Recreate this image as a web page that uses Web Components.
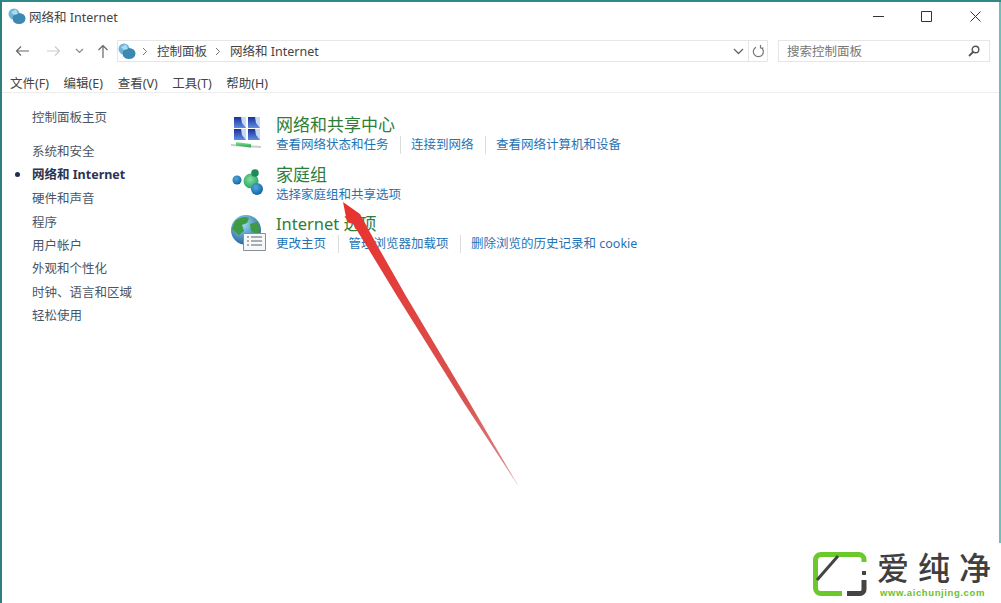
<!DOCTYPE html>
<html>
<head>
<meta charset="utf-8">
<style>
  html, body { margin: 0; padding: 0; background: #fff; }
  body { width: 1001px; height: 603px; overflow: hidden; font-family: "Noto Sans", "Noto Sans CJK SC", sans-serif; color: #444; }
</style>
</head>
<body>
<cp-window>
  <cp-sidebar slot="side"></cp-sidebar>
  <cp-section slot="main" heading="网络和共享中心" links="查看网络状态和任务|连接到网络|查看网络计算机和设备" icon="net"></cp-section>
  <cp-section slot="main" heading="家庭组" links="选择家庭组和共享选项" icon="home"></cp-section>
  <cp-section slot="main" tight heading="Internet 选项" links="更改主页|管理浏览器加载项|删除浏览的历史记录和 cookie" icon="globe"></cp-section>
  <site-logo slot="foot"></site-logo>
</cp-window>
<red-arrow></red-arrow>

<script>
const NET_ICON = `<svg width="18" height="17" viewBox="0 0 18 17"><circle cx="6" cy="6" r="5.500" fill="#6fb4d8"/><ellipse cx="11" cy="10.500" rx="6.500" ry="5.500" fill="#3d88b0"/><path d="M3 4l5-2.500 2 4.500-4 1z" fill="#a8dcef"/></svg>`;

class CpWindow extends HTMLElement {
  constructor() {
    super();
    const root = this.attachShadow({ mode: 'open' });
    root.innerHTML = `
    <style>
      :host { display: flex; flex-direction: column; width: 1001px; height: 603px; box-sizing: border-box; border-top: 2px solid #2f8a86; border-left: 2px solid #2f7f7c; background: #fff; font-size: 12.500px; }
      .frame { display: flex; flex-direction: column; height: 541px; flex: none; border-right: 2px solid #6cc0bb; }
      .title { display: flex; align-items: center; height: 28px; margin-bottom: 2px; padding-left: 6px; }
      .title span { flex: 1; margin-left: 3px; font-size: 12.500px; }
      .ctl { width: 48px; height: 28px; display: flex; align-items: center; justify-content: center; }
      .ctl.x { width: 49px; box-sizing: border-box; justify-content: flex-start; padding-left: 20px; }
      .nav { display: flex; align-items: center; height: 22px; margin-top: 8px; padding-left: 8px; }
      .nav svg { display: block; }
      .btn { display: flex; justify-content: center; flex: none; }
      .addr { display: flex; align-items: center; box-sizing: border-box; width: 631px; height: 22px; margin-left: 6px; border: 1px solid #e6e6e6; border-right: 0; }
      .addr span, .search span { padding-bottom: 2px; }
      .addr .grow { flex: 1; }
      .addr .ch { margin: 0 9px 0 8px; }
      .addr .ch.first { margin-left: 6px; }
      .ref { box-sizing: border-box; width: 20px; height: 22px; border: 1px solid #e6e6e6; display: flex; align-items: center; justify-content: center; }
      .search { display: flex; align-items: center; box-sizing: border-box; width: 212px; height: 22px; margin-left: 10px; border: 1px solid #e6e6e6; padding: 0 9px 0 8px; color: #777; }
      .search span { flex: 1; }
      .menu { display: flex; height: 19px; align-items: center; padding-left: 8px; gap: 14.600px; border-bottom: 1px solid #ededed; margin-top: 11px; }
      .body { display: flex; flex: 1; }
      .side { width: 228px; flex: none; }
      .main { display: flex; flex-direction: column; padding-top: 20px; }
      .foot { flex: 1; }
    </style>
    <div class="frame">
      <div class="title">
        ${NET_ICON}
        <span>网络和 Internet</span>
        <div class="ctl"><svg width="11" height="11"><path d="M0 5.500h11" stroke="#333"/></svg></div>
        <div class="ctl"><svg width="11" height="11"><path d="M.5.500h10v10H.5z" fill="none" stroke="#333"/></svg></div>
        <div class="ctl x"><svg width="11" height="11"><path d="M.5.500l10 10M10.500.500l-10 10" stroke="#333"/></svg></div>
      </div>
      <div class="nav">
        <div class="btn" style="width:24px"><svg width="14" height="12"><path d="M14 6H1.500M6 1.500L1.500 6 6 10.500" fill="none" stroke="#666" stroke-width="1.200"/></svg></div>
        <div class="btn" style="width:24px;margin-left:8px"><svg width="14" height="12"><path d="M0 6h12.500M8 1.500L12.500 6 8 10.500" fill="none" stroke="#ccc" stroke-width="1.200"/></svg></div>
        <div class="btn" style="width:16px;margin-left:5px"><svg width="9" height="6"><path d="M1 1l3.500 3.500L8 1" fill="none" stroke="#888" stroke-width="1.200"/></svg></div>
        <div class="btn" style="width:16px;margin-left:8px"><svg width="12" height="14"><path d="M6 14V1.500M1.500 6L6 1.500 10.500 6" fill="none" stroke="#666" stroke-width="1.200"/></svg></div>
        <div class="addr">
          ${NET_ICON}
          <svg class="ch first" width="6" height="9"><path d="M1 1l3.500 3.500L1 8" fill="none" stroke="#777"/></svg>
          <span>控制面板</span>
          <svg class="ch" width="6" height="9"><path d="M1 1l3.500 3.500L1 8" fill="none" stroke="#777"/></svg>
          <span>网络和 Internet</span>
          <span class="grow"></span>
          <svg width="11" height="7" style="margin-right:4px"><path d="M1 1l4.500 4.500L10 1" fill="none" stroke="#666" stroke-width="1.300"/></svg>
        </div>
        <div class="ref"><svg width="13" height="13"><path d="M8.500 2.200A5 5 0 1 1 4 2.300M8.500 0v3h3" fill="none" stroke="#777" stroke-width="1.200"/></svg></div>
        <div class="search"><span>搜索控制面板</span><svg width="12" height="12"><circle cx="7.500" cy="4.500" r="3.300" fill="none" stroke="#555" stroke-width="1.400"/><path d="M5 7L1 11" stroke="#555" stroke-width="1.800"/></svg></div>
      </div>
      <div class="menu"><span>文件(F)</span><span>编辑(E)</span><span>查看(V)</span><span>工具(T)</span><span>帮助(H)</span></div>
      <div class="body">
        <div class="side"><slot name="side"></slot></div>
        <div class="main"><slot name="main"></slot></div>
      </div>
    </div>
    <div class="foot"><slot name="foot"></slot></div>`;
  }
}

class CpSidebar extends HTMLElement {
  constructor() {
    super();
    const root = this.attachShadow({ mode: 'open' });
    const items = ['硬件和声音','程序','用户帐户','外观和个性化','时钟、语言和区域','轻松使用'];
    root.innerHTML = `
    <style>
      :host { display: block; padding: 13px 0 0 30px; font-size: 12.500px; color: #4a5566; }
      div { height: 23.400px; line-height: 23.400px; white-space: nowrap; }
      .home { margin-bottom: 11px; }
      .cur { font-weight: bold; color: #2b3350; position: relative; top: -1px; }
      .cur::before { content: ""; position: absolute; left: -17px; top: 9px; width: 5px; height: 5px; border-radius: 50%; background: #1f2d50; }
    </style>
    <div class="home">控制面板主页</div>
    <div>系统和安全</div>
    <div class="cur">网络和 Internet</div>
    ${items.map(i => `<div>${i}</div>`).join('')}`;
  }
}

const MON = (x, y) => `<rect x="${x}" y="${y}" width="12" height="11" fill="#c9d9f4"/><path d="M${x} ${y}h7l1 6 4 5H${x}z" fill="url(#m)"/>`;

const ICONS = {
  net: `<svg width="32" height="34" viewBox="0 0 32 34"><defs><linearGradient id="m" x1="0" y1="0" x2="0" y2="1"><stop offset="0" stop-color="#1b2f9a"/><stop offset="1" stop-color="#5f8fe0"/></linearGradient><linearGradient id="t" x1="0" y1="0" x2="0" y2="1"><stop offset="0" stop-color="#8be79a"/><stop offset="1" stop-color="#1f9f4a"/></linearGradient></defs>${MON(4, 1)}${MON(18, 1)}${MON(4, 13)}${MON(18, 13)}<path d="M1 28l30 2v2L1 30z" fill="#c5ced4"/><path d="M6 26l15 2v3.500L6 29.500z" fill="url(#t)"/></svg>`,
  home: `<svg width="34" height="32" viewBox="0 0 34 32"><defs><radialGradient id="b" cx="40%" cy="35%" r="70%"><stop offset="0" stop-color="#4fa8e0"/><stop offset="1" stop-color="#12609c"/></radialGradient><radialGradient id="h" cx="45%" cy="40%" r="70%"><stop offset="0" stop-color="#7fe0a0"/><stop offset="1" stop-color="#1f9a58"/></radialGradient></defs><circle cx="7" cy="14" r="4.500" fill="url(#b)"/><circle cx="21" cy="15" r="7.500" fill="url(#h)"/><circle cx="25" cy="7" r="3.800" fill="#1e8a5a"/><circle cx="27" cy="23" r="6" fill="url(#b)"/></svg>`,
  globe: `<svg width="38" height="36" viewBox="0 0 38 36"><defs><radialGradient id="g" cx="40%" cy="30%" r="75%"><stop offset="0" stop-color="#9fdcf4"/><stop offset="1" stop-color="#1a5f98"/></radialGradient></defs><circle cx="16" cy="15" r="15" fill="url(#g)"/><path d="M5 6c5-4 10-5 14-3l-2 5-5 2 2 6-5 4-7-6zM20 9l7-2 3 6-2 6-7-3z" fill="#3f9a44"/><path d="M13.500 18.500h22v17h-22z" fill="#f6f7f8" stroke="#8a8f94"/><path d="M17 22h2M21 22h11M17 26h2M21 26h11M17 30h2M21 30h11" stroke="#5a6470" stroke-width="1.200"/></svg>`
};

class CpSection extends HTMLElement {
  constructor() {
    super();
    const root = this.attachShadow({ mode: 'open' });
    const links = this.getAttribute('links').split('|');
    root.innerHTML = `
    <style>
      :host { display: flex; height: 49.500px; font-size: 12.500px; }
      :host([tight]) h2 { font-size: 16.500px; }
      .ic { width: 46px; flex: none; padding-top: 3px; }
      h2 { margin: 0; font-weight: normal; font-size: 17px; line-height: 23px; color: #2f7d38; }
      .l { display: flex; line-height: 18px; color: #1f74b6; white-space: nowrap; }
      .l span + span { border-left: 1px solid #dcdcdc; margin-left: 11.500px; padding-left: 10px; }
    </style>
    <div class="ic">${ICONS[this.getAttribute('icon')]}</div>
    <div>
      <h2>${this.getAttribute('heading')}</h2>
      <div class="l">${links.map(l => `<span>${l}</span>`).join('')}</div>
    </div>`;
  }
}

class RedArrow extends HTMLElement {
  constructor() {
    super();
    const root = this.attachShadow({ mode: 'open' });
    root.innerHTML = `
    <style>:host { display: block; position: absolute; left: 0; top: 0; width: 1001px; height: 603px; pointer-events: none; }</style>
    <svg width="1001" height="603"><defs><linearGradient id="a" x1="343" y1="202" x2="519" y2="487" gradientUnits="userSpaceOnUse"><stop offset="0" stop-color="#e8322f"/><stop offset=".7" stop-color="#d9534f"/><stop offset="1" stop-color="#d89a98"/></linearGradient></defs>
    <path d="M343 202L360 214 377 245 406 296 468 400 519 487 462 400 397 296 366 245 353 224 347 222z" fill="url(#a)"/></svg>`;
  }
}

class SiteLogo extends HTMLElement {
  constructor() {
    super();
    const root = this.attachShadow({ mode: 'open' });
    root.innerHTML = `
    <style>
      :host { display: flex; padding: 7px 0 0 808px; gap: 7px; font-family: "Liberation Sans", "Noto Sans CJK SC", sans-serif; }
      .txt { display: flex; flex-direction: column; padding-top: 2px; }
      .t { color: #3f3f3f; font-size: 32px; font-weight: 500; line-height: 35px; letter-spacing: 9px; white-space: nowrap; }
      .u { color: #6cc02c; font-size: 9.500px; line-height: 11px; font-weight: bold; letter-spacing: .600px; padding-left: 3px; }
    </style>
    <svg width="60" height="48" viewBox="0 0 60 48" style="flex:none"><path d="M32 43.500H11a5.500 5.500 0 0 1-5.500-5.500V10A5.500 5.500 0 0 1 11 4.500H49a5 5 0 0 1 5 5V12" fill="none" stroke="#6cc92c" stroke-width="5"/><path d="M7 30L28 6" stroke="#444" stroke-width="3"/><path d="M37 43.500H50a4 4 0 0 0 4-4V30" fill="none" stroke="#444" stroke-width="5"/><rect x="52" y="21" width="4" height="4" fill="#444"/></svg>
    <div class="txt"><div class="t">爱纯净</div><div class="u">www.aichunjing.com</div></div>`;
  }
}

customElements.define('cp-window', CpWindow);
customElements.define('cp-sidebar', CpSidebar);
customElements.define('cp-section', CpSection);
customElements.define('red-arrow', RedArrow);
customElements.define('site-logo', SiteLogo);
</script>
</body>
</html>
